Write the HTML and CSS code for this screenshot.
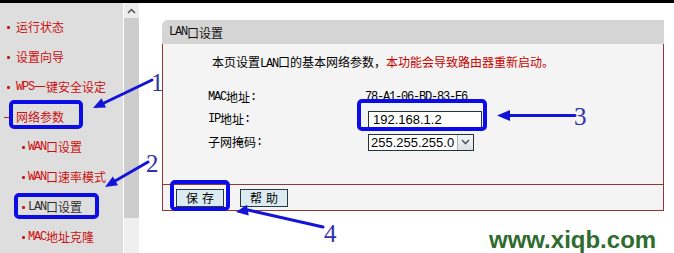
FILE: index.html
```html
<!DOCTYPE html>
<html lang="zh-CN">
<head>
<meta charset="utf-8">
<title>LAN口设置</title>
<link rel="stylesheet" href="styles.css">
</head>
<body>
<div class="topbar"></div>
<div class="frame">
  <nav class="sidebar">
    <div class="item"><span class="dot"></span>运行状态</div>
    <div class="item"><span class="dot"></span>设置向导</div>
    <div class="item"><span class="dot"></span><span class="en">WPS</span>一键安全设定</div>
    <div class="item open"><span class="dash"></span>网络参数</div>
    <div class="item sub"><span class="dot"></span><span class="en">WAN</span>口设置</div>
    <div class="item sub"><span class="dot"></span><span class="en">WAN</span>口速率模式</div>
    <div class="item sub active"><span class="dot"></span><span class="en">LAN</span>口设置</div>
    <div class="item sub"><span class="dot"></span><span class="en">MAC</span>地址克隆</div>
  </nav>
  <div class="scroll">
    <div class="sc-up"><svg width="9" height="6" viewBox="0 0 9 6"><path d="M1 5 L4.5 1.5 L8 5" fill="none" stroke="#555" stroke-width="1.5"/></svg></div>
    <div class="sc-thumb"></div>
    <div class="sc-track"></div>
  </div>
  <main class="main">
    <section class="panel">
      <div class="ph"><span class="en">LAN</span>口设置</div>
      <div class="pb">
        <p class="intro">本页设置<span class="en">LAN</span>口的基本网络参数，<span class="warn">本功能会导致路由器重新启动。</span></p>
        <div class="form">
          <div class="lbl"><span class="en">MAC</span>地址<span class="en">:</span></div>
          <div class="val en">78-A1-06-BD-83-E6</div>
          <div class="lbl"><span class="en">IP</span>地址<span class="en">:</span></div>
          <div class="val"><div class="input">192.168.1.2</div></div>
          <div class="lbl">子网掩码<span class="en">:</span></div>
          <div class="val"><div class="select"><span class="sel-text">255.255.255.0</span><span class="sel-btn"><svg width="9" height="6" viewBox="0 0 9 6"><path d="M1 1 L4.5 4.5 L8 1" fill="none" stroke="#4a5a6a" stroke-width="1.6"/></svg></span></div></div>
        </div>
      </div>
      <div class="pf">
        <button class="btn">保存</button>
        <button class="btn">帮助</button>
      </div>
    </section>
  </main>
</div>
<svg class="annot" width="674" height="253" viewBox="0 0 674 253">
  <g fill="none" stroke="#0c0ce8" stroke-width="4">
    <rect x="11" y="102" width="70" height="25" rx="3"/>
    <rect x="16" y="195" width="81" height="22" rx="3"/>
    <rect x="359" y="101" width="126" height="28" rx="3"/>
    <rect x="172" y="182" width="56" height="27" rx="3"/>
  </g>
  <g stroke="#1414d8" stroke-width="3" stroke-linecap="round">
    <line x1="152" y1="80" x2="104" y2="103"/>
    <line x1="148" y1="162" x2="115" y2="181"/>
    <line x1="575" y1="115.5" x2="508" y2="115.5"/>
    <line x1="323" y1="227" x2="248" y2="210"/>
  </g>
  <g fill="#1414d8">
    <polygon points="93,108 106,107.6 101.5,98.2"/>
    <polygon points="105,187 118,185.3 112.9,176.4"/>
    <polygon points="497,115.5 510,110 510,121"/>
    <polygon points="236,212 248.7,215.5 247,204.8"/>
  </g>
  <g fill="#3232a8" font-family="Liberation Serif, serif" font-size="25">
    <text x="151" y="91">1</text>
    <text x="146" y="172">2</text>
    <text x="574" y="125">3</text>
    <text x="324" y="242">4</text>
  </g>
</svg>
<div class="wm">www.xiqb.com</div>
</body>
</html>
```
FILE: styles.css
```css
html, body {
  margin: 0;
  padding: 0;
  background: #ffffff;
}
body {
  width: 674px;
  height: 253px;
  overflow: hidden;
  position: relative;
  font-family: "Noto Sans CJK SC", "Liberation Sans", sans-serif;
  font-size: 12px;
  color: #000;
}
.en {
  font-family: "Liberation Mono", monospace;
  font-size: 12px;
  letter-spacing: -1.2px;
}
.topbar {
  height: 3px;
  background: #000;
}
.frame {
  display: flex;
  height: 250px;
}
.sidebar {
  width: 124px;
  border-right: 1px solid #ffffff;
  background: #dedede;
  padding-top: 9px;
  box-sizing: border-box;
}
.item {
  height: 30px;
  display: flex;
  align-items: center;
  padding-left: 7px;
  color: #cc1010;
  line-height: 1;
  white-space: nowrap;
}
.dot {
  width: 3px;
  height: 3px;
  background: #c02020;
  border-radius: 1px;
  margin-right: 6px;
}
.dash {
  width: 5px;
  height: 1px;
  background: #c02020;
  margin-left: -3px;
  margin-right: 7px;
}
.item.sub {
  padding-left: 22px;
}
.item.sub .dot {
  margin-right: 3px;
}
.item.active {
  color: #303030;
}
.scroll {
  width: 15px;
  display: flex;
  flex-direction: column;
}
.sc-up {
  height: 15px;
  background: #ececec;
  display: flex;
  align-items: center;
  justify-content: center;
}
.sc-thumb {
  height: 200px;
  background: #cdcdcd;
}
.sc-track {
  flex: 1;
  background: #efefef;
}
.main {
  flex: 1;
  padding: 17px 0 0 23px;
}
.panel {
  width: 502px;
}
.ph {
  height: 24px;
  background: #d5d5d5;
  border-top-left-radius: 6px;
  display: flex;
  align-items: center;
  padding-left: 7px;
  color: #111;
}
.pb {
  height: 140px;
  box-sizing: border-box;
  background: #f4f4f4;
  border-left: 1px solid #8e3a36;
  border-right: 1px solid #8e3a36;
  padding: 11px 0 0 49px;
}
.intro {
  margin: 0;
  line-height: 14px;
  height: 14px;
}
.warn {
  color: #c80000;
}
.form {
  margin-top: 19px;
  margin-left: -4px;
  display: grid;
  grid-template-columns: 157px auto;
  grid-template-rows: 18px 20px 20px;
  row-gap: 3px;
  align-items: center;
}
.lbl, .val {
  display: flex;
  align-items: center;
  line-height: 1;
}
.input {
  width: 108px;
  height: 15px;
  border: 1px solid #203434;
  background: #fff;
  font-family: "Liberation Sans", Arial, sans-serif;
  font-size: 13px;
  line-height: 15px;
  padding-left: 4px;
  margin-left: 3px;
}
.select {
  width: 104px;
  height: 15px;
  border: 1px solid #203434;
  background: #fff;
  margin-left: 3px;
  display: flex;
  align-items: stretch;
  font-family: "Liberation Sans", Arial, sans-serif;
  font-size: 13px;
}
.sel-text {
  flex: 1;
  line-height: 15px;
  padding-left: 2px;
}
.sel-btn {
  width: 15px;
  background: linear-gradient(#f4f6f8, #dde2e6);
  border-left: 1px solid #a9b3bb;
  display: flex;
  align-items: center;
  justify-content: center;
}
.pf {
  height: 25px;
  background: #f4f4f4;
  border: 1px solid #8e3a36;
  display: flex;
  align-items: center;
  gap: 16px;
  padding-left: 13px;
}
.btn {
  height: 18px;
  padding: 0 5px 0 9px;
  margin: 0;
  border: 1px solid #2a3a40;
  background: #dcebf1;
  font-family: "Noto Sans CJK SC", sans-serif;
  font-size: 12px;
  letter-spacing: 4px;
  line-height: 16px;
  color: #000;
  margin-top: 1px;
}
.annot {
  position: absolute;
  left: 0;
  top: 0;
  pointer-events: none;
}
.wm {
  position: absolute;
  left: 489px;
  top: 226px;
  font-family: "Liberation Sans", Arial, sans-serif;
  font-weight: bold;
  font-size: 24px;
  line-height: 28px;
  color: #2e6b2e;
}
```
